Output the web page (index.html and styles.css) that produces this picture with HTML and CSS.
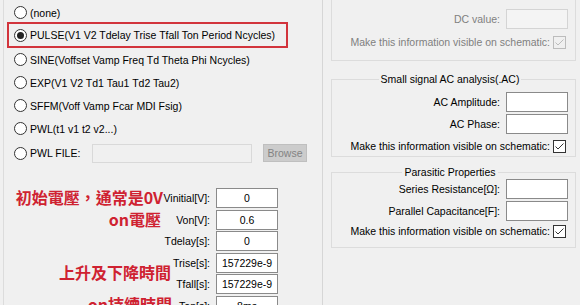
FILE: index.html
```html
<!DOCTYPE html>
<html lang="en">
<head>
  <meta charset="UTF-8">
  <meta name="viewport" content="width=device-width, initial-scale=1.0">
  <title>Independent Voltage Source</title>
  <link rel="stylesheet" href="styles.css">
</head>
<body>
  <div class="dialog">
    <div class="left">
      <div class="opts">
        <div class="opt first"><span class="radio"></span>(none)</div>
        <div class="opt picked"><span class="radio on"></span>PULSE(V1 V2 Tdelay Trise Tfall Ton Period Ncycles)</div>
        <div class="opt"><span class="radio"></span>SINE(Voffset Vamp Freq Td Theta Phi Ncycles)</div>
        <div class="opt"><span class="radio"></span>EXP(V1 V2 Td1 Tau1 Td2 Tau2)</div>
        <div class="opt"><span class="radio"></span>SFFM(Voff Vamp Fcar MDI Fsig)</div>
        <div class="opt"><span class="radio"></span>PWL(t1 v1 t2 v2...)</div>
        <div class="opt file">
          <span class="radio"></span><span class="file-label">PWL FILE:</span>
          <span class="field off wide"></span>
          <span class="btn">Browse</span>
        </div>
      </div>

      <div class="params">
        <div class="param"><span>Vinitial[V]:</span><span class="field">0</span></div>
        <div class="param"><span>Von[V]:</span><span class="field">0.6</span></div>
        <div class="param"><span>Tdelay[s]:</span><span class="field">0</span></div>
        <div class="param"><span>Trise[s]:</span><span class="field">157229e-9</span></div>
        <div class="param"><span>Tfall[s]:</span><span class="field">157229e-9</span></div>
        <div class="param"><span>Ton[s]:</span><span class="field">8ms</span></div>

        <span class="note n1">初始電壓，通常是0V</span>
        <span class="note n2">on電壓</span>
        <span class="note n3">上升及下降時間</span>
        <span class="note n4">on持續時間</span>
      </div>
    </div>

    <div class="right">
      <div class="group dc">
        <div class="row dim"><span>DC value:</span><span class="field off"></span></div>
        <div class="row check-row dim">
          <span>Make this information visible on schematic:</span>
          <span class="check off"><svg width="11" height="11" viewBox="0 0 11 11"><polyline points="1.5,5.5 4,8 9.5,2.5" fill="none" stroke="currentColor" stroke-width="1"/></svg></span>
        </div>
      </div>

      <div class="group ac">
        <div class="title">Small signal AC analysis(.AC)</div>
        <div class="row first-row"><span>AC Amplitude:</span><span class="field"></span></div>
        <div class="row"><span>AC Phase:</span><span class="field"></span></div>
        <div class="row check-row">
          <span>Make this information visible on schematic:</span>
          <span class="check"><svg width="11" height="11" viewBox="0 0 11 11"><polyline points="1.5,5.5 4,8 9.5,2.5" fill="none" stroke="currentColor" stroke-width="1"/></svg></span>
        </div>
      </div>

      <div class="group par">
        <div class="title">Parasitic Properties</div>
        <div class="row first-row"><span>Series Resistance[Ω]:</span><span class="field"></span></div>
        <div class="row"><span>Parallel Capacitance[F]:</span><span class="field"></span></div>
        <div class="row check-row tight">
          <span>Make this information visible on schematic:</span>
          <span class="check"><svg width="11" height="11" viewBox="0 0 11 11"><polyline points="1.5,5.5 4,8 9.5,2.5" fill="none" stroke="currentColor" stroke-width="1"/></svg></span>
        </div>
      </div>
    </div>
  </div>
</body>
</html>
```

FILE: styles.css
```css
body {
  margin: 0;
  background-color: #f0f0f0;
  font-family: 'Liberation Sans', Arial, sans-serif;
  font-size: 10.5px;
  line-height: 12px;
  color: #000;
  width: 580px;
  height: 305px;
  overflow: hidden;
}
.dialog {
  display: flex;
  height: 305px;
}
.left {
  margin-left: 3px;
  width: 320px;
  box-sizing: border-box;
  border-left: 1px solid #dcdcdc;
  border-right: 1px solid #d6d6d6;
  height: 305px;
}
.opts {
  padding: 3px 0 0 3px;
}
.opt {
  display: flex;
  align-items: center;
  height: 23px;
  box-sizing: border-box;
  border: 2px solid transparent;
  padding-left: 5px;
  white-space: nowrap;
}
.opt.first {
  height: 19px;
}
.opt.picked {
  height: 26px;
  width: 281px;
  border-color: #d2343c;
}
.opt.file {
  height: 26px;
}
.radio {
  width: 13px;
  height: 13px;
  box-sizing: border-box;
  border: 1px solid #333;
  border-radius: 50%;
  background: #fff;
  margin-right: 3px;
  display: flex;
  align-items: center;
  justify-content: center;
  flex-shrink: 0;
}
.radio.on::after {
  content: '';
  width: 7px;
  height: 7px;
  border-radius: 50%;
  background: #222;
}
.file-label {
  width: 62px;
}
.field {
  width: 62px;
  height: 20px;
  box-sizing: border-box;
  border: 1px solid #8a8a8a;
  background: #fff;
  display: flex;
  align-items: center;
  justify-content: center;
  flex-shrink: 0;
}
.field.off {
  border-color: #d4d4d4;
  background: #f4f4f4;
}
.field.wide {
  width: 160px;
  height: 19px;
  border-color: #d9d9d9;
  background: #f0f0f0;
}
.btn {
  margin-left: 11px;
  width: 44px;
  height: 18px;
  box-sizing: border-box;
  border: 1px solid #bfbfbf;
  background: #cccccc;
  color: #838383;
  display: flex;
  align-items: center;
  justify-content: center;
}
.params {
  position: relative;
  margin-top: 21.5px;
  width: 274px;
}
.param {
  display: flex;
  justify-content: flex-end;
  align-items: center;
  height: 21.5px;
}
.param span:first-child {
  margin-right: 6px;
}
.note {
  position: absolute;
  font-family: 'Noto Sans CJK TC', 'Noto Sans CJK SC', sans-serif;
  font-weight: bold;
  font-size: 16px;
  line-height: 18px;
  color: #cf2231;
  white-space: nowrap;
}
.n1 { right: 115px; top: 0.5px; }
.n2 { right: 117px; top: 22.5px; }
.n3 { right: 107px; top: 75.5px; }
.n4 { right: 106px; top: 107.5px; }
.right {
  margin-left: 8px;
  width: 245px;
}
.group {
  border: 1px solid #dcdcdc;
  padding: 0 7px 0 0;
}
.group.dc {
  border-top: none;
  padding-top: 9px;
  padding-bottom: 8px;
}
.group.ac {
  margin-top: 18px;
}
.group.par {
  margin-top: 15px;
  padding-bottom: 6px;
}
.title {
  display: table;
  margin: -7px auto 0;
  padding: 0 2px;
  background: #f0f0f0;
}
.row {
  display: flex;
  justify-content: flex-end;
  align-items: center;
  height: 20px;
  margin-top: 2px;
  white-space: nowrap;
}
.dc .row:first-child {
  margin-top: 0;
}
.dc .check-row {
  margin-top: 3px;
}
.ac .first-row {
  margin-top: 7px;
}
.par .first-row {
  margin-top: 1px;
}
.par .tight {
  margin-top: 0;
}
.row span:first-child {
  margin-right: 6px;
}
.check-row span:first-child {
  margin-right: 3px;
}
.dim {
  color: #7f7f7f;
}
.check {
  width: 13px;
  height: 13px;
  box-sizing: border-box;
  border: 1px solid #333;
  background: #fff;
  color: #333;
  margin-right: 2px;
  display: flex;
  align-items: center;
  justify-content: center;
}
.check.off {
  border-color: #bcbcbc;
  background: #f0f0f0;
  color: #bcbcbc;
}
```
